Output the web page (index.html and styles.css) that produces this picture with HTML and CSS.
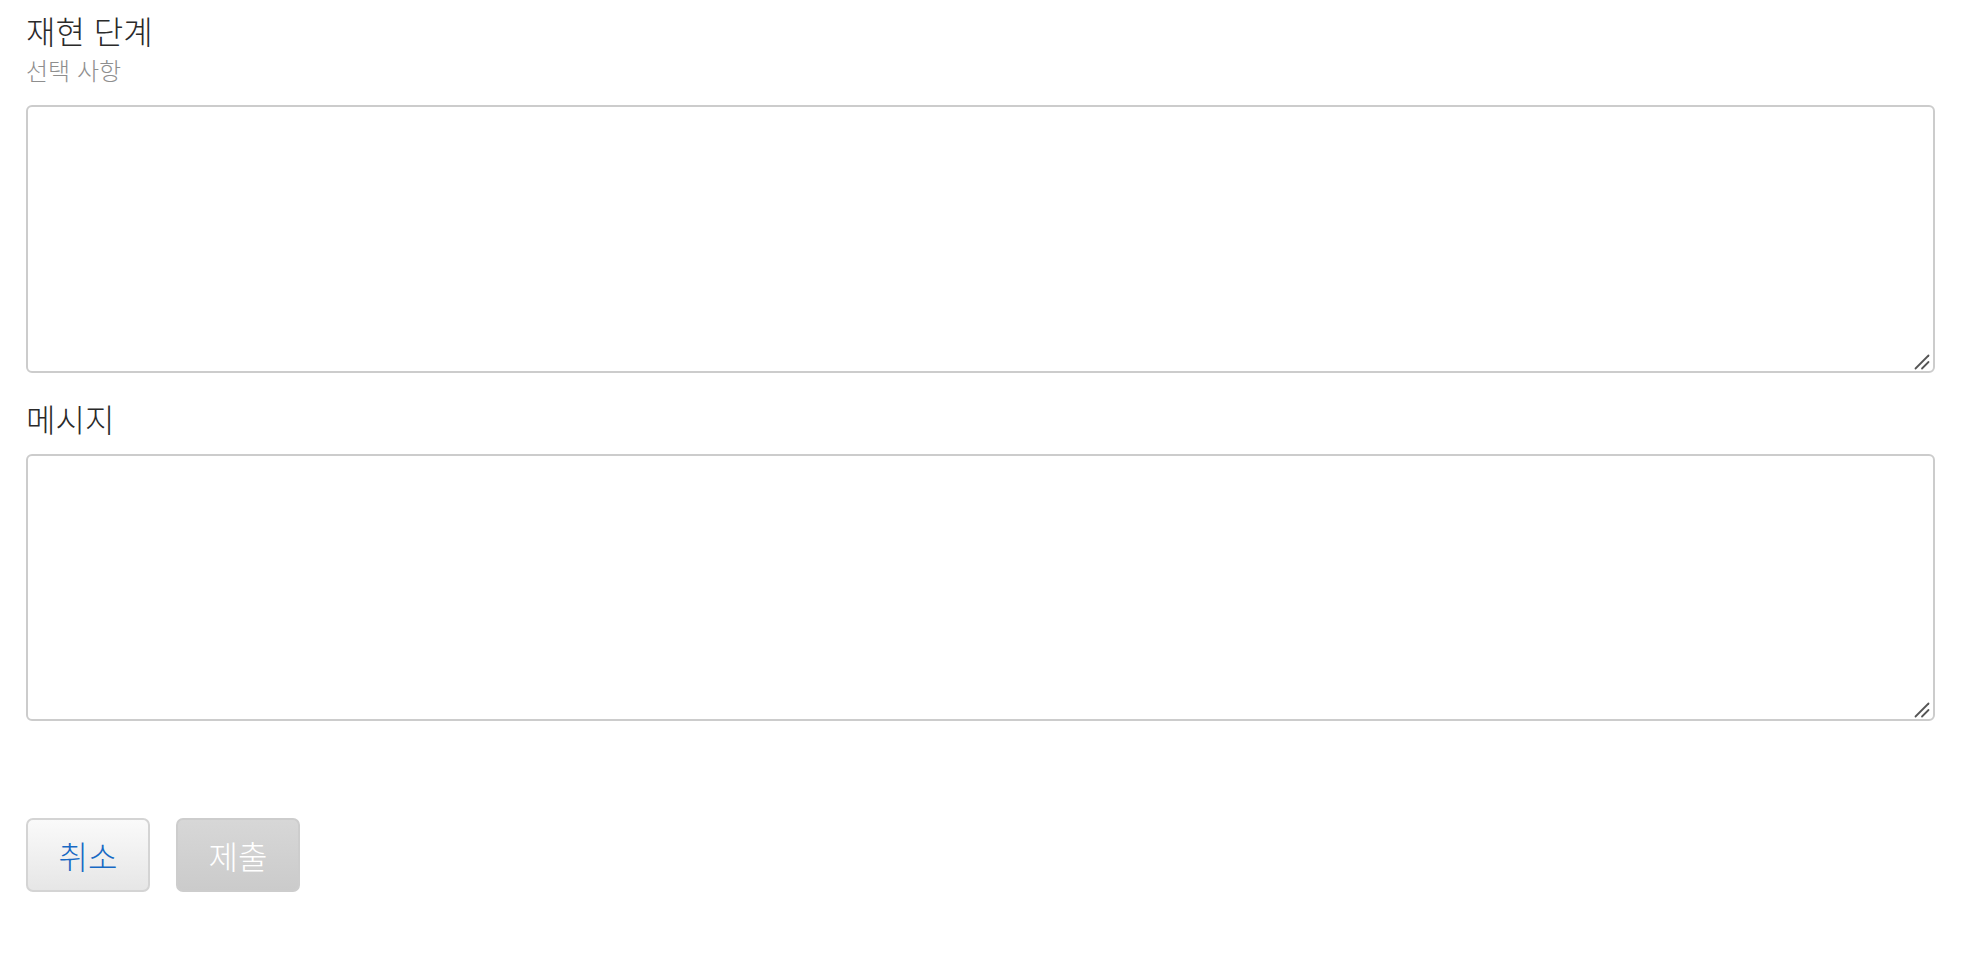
FILE: index.html
```html
<!DOCTYPE html>
<html lang="ko">
<head>
<meta charset="utf-8">
<title>피드백</title>
<link rel="stylesheet" href="styles.css">
</head>
<body>
<form class="form">
  <div class="field">
    <label class="field-label" for="steps">재현 단계</label>
    <div class="field-hint">선택 사항</div>
    <div class="input-wrap input-wrap-steps">
      <textarea id="steps" class="field-input"></textarea>
      <svg class="grip" width="16" height="16" viewBox="0 0 16 16" aria-hidden="true">
        <line x1="1.5" y1="14.5" x2="14.5" y2="1.5" />
        <line x1="8" y1="14.5" x2="14.5" y2="8" />
      </svg>
    </div>
  </div>
  <div class="field field-message">
    <label class="field-label" for="msg">메시지</label>
    <div class="input-wrap input-wrap-msg">
      <textarea id="msg" class="field-input"></textarea>
      <svg class="grip" width="16" height="16" viewBox="0 0 16 16" aria-hidden="true">
        <line x1="1.5" y1="14.5" x2="14.5" y2="1.5" />
        <line x1="8" y1="14.5" x2="14.5" y2="8" />
      </svg>
    </div>
  </div>
  <div class="actions">
    <button type="button" class="btn btn-cancel">취소</button>
    <button type="button" class="btn btn-submit" disabled>제출</button>
  </div>
</form>
</body>
</html>
```
FILE: styles.css
```css
html, body {
  margin: 0;
  padding: 0;
  background: #ffffff;
}

body {
  font-family: "Noto Sans CJK KR", "Noto Sans", sans-serif;
  color: #333333;
}

.form {
  width: 1908px;
  padding: 10px 0 0 26px;
  display: flex;
  flex-direction: column;
}

.field {
  display: flex;
  flex-direction: column;
}

.field-label {
  font-size: 32px;
  font-weight: 300;
  line-height: 40px;
  color: #2a2a2a;
}

.field-hint {
  font-size: 24px;
  font-weight: 300;
  line-height: 32px;
  color: #8e8e8e;
  margin-top: 4px;
}

.input-wrap {
  position: relative;
  margin-top: 19px;
}

.input-wrap-msg {
  margin-top: 16px;
}

.field-input {
  display: block;
  box-sizing: border-box;
  width: 1909px;
  height: 268px;
  margin: 0;
  border: 2px solid #cccccc;
  border-radius: 6px;
  background: #ffffff;
  resize: none;
  outline: none;
  font-family: inherit;
  font-size: 22px;
}

.input-wrap-msg .field-input {
  height: 267px;
}

.grip {
  position: absolute;
  right: 4px;
  bottom: 3px;
  stroke: #555555;
  stroke-width: 1.8;
  stroke-linecap: round;
}

.field-message {
  margin-top: 25px;
}

.actions {
  display: flex;
  gap: 26px;
  margin-top: 97px;
}

.btn {
  box-sizing: border-box;
  width: 124px;
  height: 74px;
  border-radius: 7px;
  font-family: inherit;
  font-size: 32px;
  font-weight: 300;
  padding: 0;
  cursor: pointer;
}

.btn-cancel {
  border: 2px solid #d4d4d4;
  background: linear-gradient(#fafafa, #e6e6e6);
  color: #1769c4;
}

.btn-submit {
  border: 2px solid #cdcdcd;
  background: linear-gradient(#d7d7d7, #cbcbcb);
  color: #ffffff;
}
```
